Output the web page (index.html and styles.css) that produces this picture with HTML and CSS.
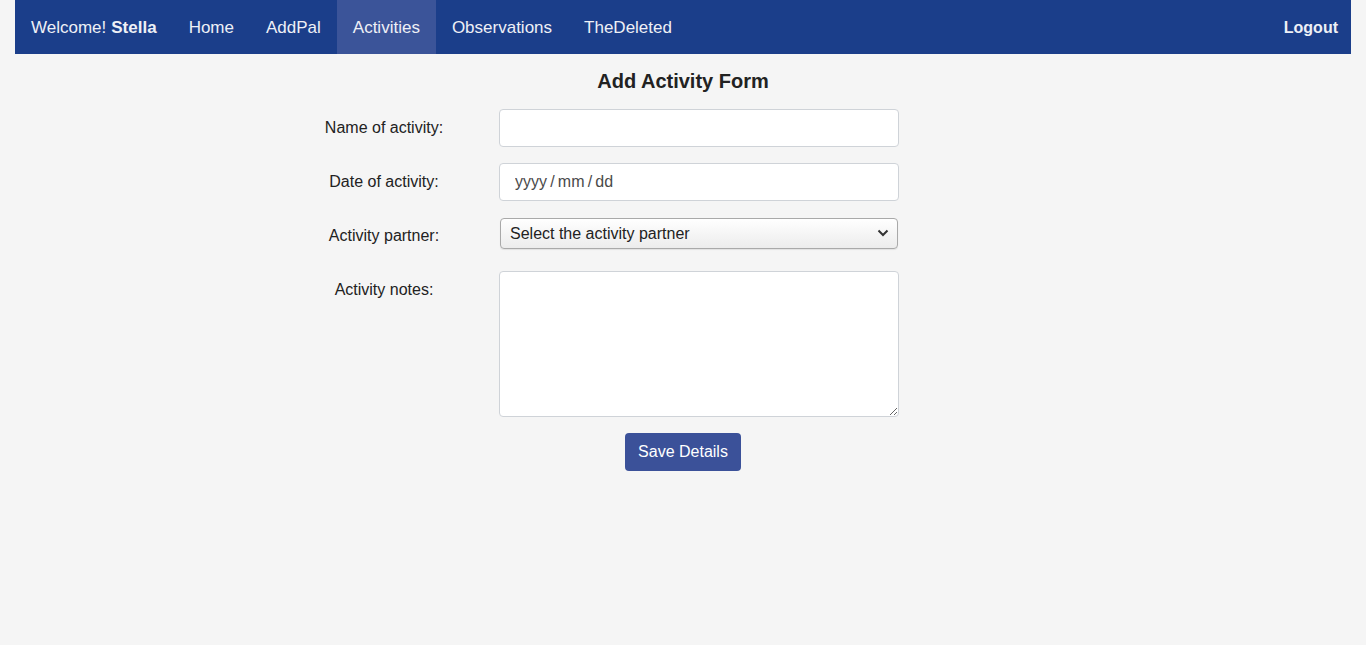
FILE: index.html
```html
<!DOCTYPE html>
<html lang="en">
<head>
<meta charset="utf-8">
<title>Add Activity</title>
<link rel="stylesheet" href="styles.css">
</head>
<body>
<div class="page">
  <nav class="topnav">
    <div class="nav-left">
      <span class="nav-item">Welcome! <b>Stella</b></span>
      <a class="nav-item" href="#">Home</a>
      <a class="nav-item" href="#">AddPal</a>
      <a class="nav-item active" href="#">Activities</a>
      <a class="nav-item" href="#">Observations</a>
      <a class="nav-item" href="#">TheDeleted</a>
    </div>
    <a class="nav-item logout" href="#">Logout</a>
  </nav>
  <main class="content">
    <h2 class="title">Add Activity Form</h2>
    <form class="form-grid">
      <label class="lbl">Name of activity:</label>
      <input class="field" type="text">
      <label class="lbl">Date of activity:</label>
      <input class="field date" type="text" placeholder="yyyy&#8201;/&#8201;mm&#8201;/&#8201;dd">
      <label class="lbl">Activity partner:</label>
      <div class="select-wrap">
        <select class="select">
          <option>Select the activity partner</option>
        </select>
        <svg class="chev" width="12" height="8" viewBox="0 0 12 8"><path d="M1.5 1.5 L6 6 L10.5 1.5" fill="none" stroke="#333" stroke-width="2"/></svg>
      </div>
      <label class="lbl">Activity notes:</label>
      <textarea class="field notes"></textarea>
    </form>
    <div class="actions">
      <button class="btn" type="button">Save Details</button>
    </div>
  </main>
</div>
</body>
</html>
```
FILE: styles.css
```css
html, body {
  margin: 0;
  padding: 0;
  background: #f5f5f5;
  font-family: "Liberation Sans", Arial, sans-serif;
  color: #222;
}
.page {
  padding: 0 15px;
}
.topnav {
  display: flex;
  justify-content: space-between;
  align-items: stretch;
  height: 54px;
  background: #1b3e8a;
}
.nav-left {
  display: flex;
  align-items: stretch;
}
.nav-item {
  display: flex;
  align-items: center;
  padding: 1px 16px 0;
  font-size: 17px;
  color: #eef0f6;
  text-decoration: none;
}
.nav-item b {
  font-weight: bold;
  margin-left: 5px;
}
.nav-item.active {
  background: #3b5499;
}
.logout {
  font-weight: bold;
  font-size: 16px;
  padding: 1px 13px 0 16px;
}
.content {
  padding-top: 16px;
}
.title {
  margin: 0;
  text-align: center;
  font-size: 20px;
  line-height: 23px;
  font-weight: bold;
  color: #222;
}
.form-grid {
  margin-top: 16px;
  display: grid;
  grid-template-columns: 230px 400px;
  row-gap: 16px;
  margin-left: calc(50% - 414px);
}
.lbl {
  text-align: center;
  font-size: 16px;
  line-height: 38px;
  height: 38px;
  color: #222;
}
.field {
  box-sizing: border-box;
  width: 400px;
  height: 38px;
  border: 1px solid #cfd3d8;
  border-radius: 4px;
  background: #fff;
  font-family: "Liberation Sans", Arial, sans-serif;
  font-size: 16px;
  padding: 0 15px;
  margin: 0;
  outline: none;
}
.date::placeholder {
  color: #4a4a4a;
}
.notes {
  height: 146px;
  padding: 8px 15px;
  resize: vertical;
  display: block;
}
.select-wrap {
  position: relative;
  height: 38px;
}
.select {
  appearance: none;
  -webkit-appearance: none;
  box-sizing: border-box;
  margin: 1px 0 0 1px;
  width: 398px;
  height: 31px;
  border: 1px solid #a9a9a9;
  border-radius: 4px;
  background: linear-gradient(#ffffff, #ececec);
  font-family: "Liberation Sans", Arial, sans-serif;
  font-size: 16px;
  color: #222;
  padding: 0 30px 0 9px;
  box-shadow: 0 1px 1px rgba(0,0,0,0.08);
}
.chev {
  position: absolute;
  left: 378px;
  top: 12px;
  pointer-events: none;
}
.actions {
  display: flex;
  justify-content: center;
  margin-top: 16px;
}
.btn {
  height: 38px;
  width: 116px;
  border: none;
  border-radius: 4px;
  background: #3b5199;
  color: #fff;
  font-family: "Liberation Sans", Arial, sans-serif;
  font-size: 16px;
  padding: 0;
}
```
